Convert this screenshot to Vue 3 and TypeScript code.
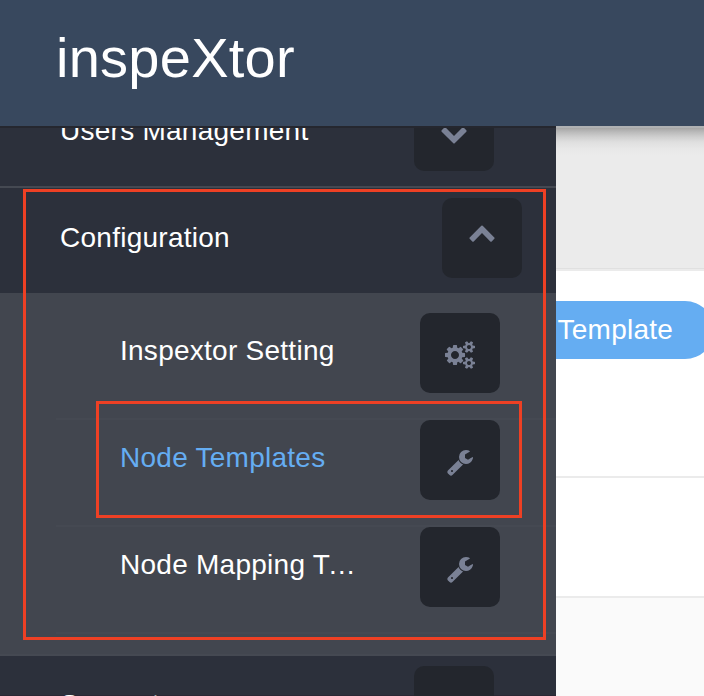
<script setup lang="ts">
type IconName = 'down' | 'up' | 'cogs' | 'wrench'

interface SubItem {
  label: string
  icon: IconName
  active?: boolean
  truncated?: boolean
}

interface MenuItem {
  label: string
  icon: IconName
  open?: boolean
  children?: SubItem[]
}

const icons: Record<IconName, { width: number; path: string }> = {
  down: {
    width: 1792,
    path: 'M1683 808l-742 741q-19 19-45 19t-45-19l-742-741q-19-19-19-45.500t19-45.500l166-165q19-19 45-19t45 19l531 531 531-531q19-19 45-19t45 19l166 165q19 19 19 45.500t-19 45.500z',
  },
  up: {
    width: 1792,
    path: 'M1683 1331l-166 165q-19 19-45 19t-45-19l-531-531-531 531q-19 19-45 19t-45-19l-166-165q-19-19-19-45.500t19-45.500l742-741q19-19 45-19t45 19l742 741q19 19 19 45.500t-19 45.500z',
  },
  cogs: {
    width: 1920,
    path: 'M896 896q0-106-75-181t-181-75-181 75-75 181 75 181 181 75 181-75 75-181zm768 512q0-52-38-90t-90-38-90 38-38 90q0 53 37.500 90.500t90.500 37.500 90.500-37.500 37.500-90.500zm0-1024q0-52-38-90t-90-38-90 38-38 90q0 53 37.500 90.500t90.500 37.500 90.500-37.500 37.500-90.500zm-384 421v185q0 10-7 19.500t-16 10.500l-155 24q-11 35-32 76 34 48 90 115 7 11 7 20 0 12-7 19-23 30-82.500 89.500t-78.500 59.500q-11 0-21-7l-115-90q-37 19-77 31-11 108-23 155-7 24-30 24h-186q-11 0-20-7.500t-10-17.500l-23-153q-34-10-75-31l-118 89q-7 7-20 7-11 0-21-8-144-133-144-160 0-9 7-19 10-14 41-53t47-61q-23-44-35-82l-152-24q-10-1-17-9.500t-7-19.500v-185q0-10 7-19.500t16-10.500l155-24q11-35 32-76-34-48-90-115-7-11-7-20 0-12 7-20 22-30 82-89t79-59q11 0 21 7l115 90q34-18 77-32 11-108 23-154 7-24 30-24h186q11 0 20 7.500t10 17.500l23 153q34 10 75 31l118-89q8-7 20-7 11 0 21 8 144 133 144 160 0 8-7 19-12 16-42 54t-45 60q23 48 34 82l152 23q10 2 17 10.500t7 19.500zm640 533v140q0 16-149 31-12 27-30 52 51 113 51 138 0 4-4 7-122 71-124 71-8 0-46-47t-52-68q-20 2-30 2t-30-2q-14 21-52 68t-46 47q-2 0-124-71-4-3-4-7 0-25 51-138-18-25-30-52-149-15-149-31v-140q0-16 149-31 13-29 30-52-51-113-51-138 0-4 4-7 4-2 35-20t59-34 30-16q8 0 46 46.500t52 67.500q20-2 30-2t30 2q51-71 92-112l6-2q4 0 124 70 4 3 4 7 0 25-51 138 17 23 30 52 149 15 149 31zm0-1024v140q0 16-149 31-12 27-30 52 51 113 51 138 0 4-4 7-122 71-124 71-8 0-46-47t-52-68q-20 2-30 2t-30-2q-14 21-52 68t-46 47q-2 0-124-71-4-3-4-7 0-25 51-138-18-25-30-52-149-15-149-31v-140q0-16 149-31 13-29 30-52-51-113-51-138 0-4 4-7 4-2 35-20t59-34 30-16q8 0 46 46.500t52 67.500q20-2 30-2t30 2q51-71 92-112l6-2q4 0 124 70 4 3 4 7 0 25-51 138 17 23 30 52 149 15 149 31z',
  },
  wrench: {
    width: 1792,
    path: 'M448 1472q0-26-19-45t-45-19-45 19-19 45 19 45 45 19 45-19 19-45zm644-420l-682 682q-37 37-90 37-52 0-91-37l-106-108q-38-36-38-90 0-53 38-91l681-681q39 98 114.500 173.500t173.500 114.500zm634-435q0 39-23 106-47 134-164.500 217.500t-258.500 83.500q-185 0-316.500-131.500t-131.500-316.500 131.500-316.500 316.500-131.500q58 0 121.500 16.500t107.500 46.500q16 11 16 28t-16 28l-293 169v224l193 107q5-3 79-48.500t135.500-81 70.500-35.500q15 0 23.500 10t8.500 25z',
  },
}

const menu: MenuItem[] = [
  { label: 'Users Management', icon: 'down' },
  {
    label: 'Configuration',
    icon: 'up',
    open: true,
    children: [
      { label: 'Inspextor Setting', icon: 'cogs' },
      { label: 'Node Templates', icon: 'wrench', active: true },
      { label: 'Node Mapping T', icon: 'wrench', truncated: true },
    ],
  },
  { label: 'Support', icon: 'down' },
]
</script>

<template>
  <div class="page">
    <header class="topbar">
      <span class="brand">inspeXtor</span>
    </header>
    <div class="body">
      <nav class="sidebar">
        <ul class="menu">
          <li v-for="item in menu" :key="item.label" class="group">
            <div class="row" :class="{ open: item.open }">
              <span class="label">{{ item.label }}</span>
              <span class="tile" :class="item.icon">
                <svg :viewBox="`0 0 ${icons[item.icon].width} 1792`" :width="icons[item.icon].width / 64" height="28">
                  <path :d="icons[item.icon].path" />
                </svg>
              </span>
            </div>
            <ul v-if="item.children" class="submenu">
              <li v-for="sub in item.children" :key="sub.label" class="subrow" :class="{ active: sub.active }">
                <span class="label">{{ sub.label }}<span v-if="sub.truncated" class="more">…</span></span>
                <span class="tile">
                  <svg :viewBox="`0 0 ${icons[sub.icon].width} 1792`" :width="icons[sub.icon].width / 64" height="28">
                    <path :d="icons[sub.icon].path" />
                  </svg>
                </span>
              </li>
            </ul>
          </li>
        </ul>
      </nav>
      <main class="content">
        <div class="crumbs"></div>
        <div class="toolbar">
          <button class="pill">Template</button>
        </div>
        <div class="filter"></div>
        <div class="table"></div>
      </main>
    </div>
    <div class="mark mark-section"></div>
    <div class="mark mark-item"></div>
  </div>
</template>

<style>
body {
  margin: 0;
}
</style>

<style scoped>
.page {
  position: relative;
  display: flex;
  flex-direction: column;
  width: 704px;
  height: 696px;
  overflow: hidden;
  font-family: "Liberation Sans", Arial, sans-serif;
  font-size: 28px;
  letter-spacing: 0.26px;
  color: #fff;
}
.topbar {
  flex: none;
  box-sizing: border-box;
  height: 126px;
  padding: 26px 56px 0;
  background: #38485e;
}
.brand {
  display: block;
  font-size: 56px;
  line-height: 63px;
}
.body {
  flex: 1;
  display: flex;
  min-height: 0;
}
.sidebar {
  flex: none;
  width: 556px;
  overflow: hidden;
  border-top: 2px solid #25272f;
  box-sizing: border-box;
  background: #2c303b;
  box-shadow: inset 0 -1px 0 #2b2734;
}
ul {
  list-style: none;
  margin: 0;
  padding: 0;
}
.menu {
  margin-top: -47px;
}
.group {
  border-bottom: 2px solid #454952;
}
.row {
  display: flex;
  justify-content: space-between;
  box-sizing: border-box;
  height: 105px;
  padding: 10px 62px 0 60px;
}
.row.open {
  padding-right: 34px;
}
.label {
  line-height: 31px;
  white-space: nowrap;
}
.row .label {
  margin-top: 24px;
}
.group:last-child .label {
  margin-top: 23px;
}
.more {
  margin-left: -2.5px;
}
.tile {
  flex: none;
  display: flex;
  align-items: center;
  justify-content: center;
  box-sizing: border-box;
  width: 80px;
  height: 80px;
  padding-top: 4px;
  border-radius: 10px;
  background: #23262d;
}
.tile svg {
  display: block;
  fill: #7a8195;
}
.tile.up {
  padding: 0 0 12px;
}
.submenu {
  padding: 20px 0;
  background: #42464f;
}
.subrow {
  display: flex;
  justify-content: space-between;
  box-sizing: border-box;
  height: 107px;
  margin-left: 56px;
  padding: 0 56px 0 64px;
  border-bottom: 2px solid #454952;
}
.subrow .label {
  margin-top: 22px;
}
.subrow.active .label {
  color: #65adf2;
}
.content {
  flex: 1;
  min-width: 0;
  display: flex;
  flex-direction: column;
  box-sizing: border-box;
  border-top: 2px solid #afb1b3;
  background: #fff;
}
.crumbs {
  flex: none;
  box-sizing: content-box;
  height: 140px;
  background: linear-gradient(#a5a5a5 0, #bababa 4px, #cfcfcf 9px, #dfdfdf 14px, #e8e8e8 21px, #ebebeb 28px);
  border-bottom: 1px solid #e0e0e0;
  box-shadow: 0 2px 0 #ebebeb;
}
.toolbar {
  box-sizing: border-box;
  height: 209px;
  padding-top: 32px;
  border-bottom: 2px solid #ebebeb;
}
.pill {
  display: block;
  box-sizing: border-box;
  width: 158px;
  height: 58px;
  padding: 13px 0 14px 1.5px;
  border: 0;
  border-radius: 0 29px 29px 0;
  background: #65adf2;
  color: #fff;
  font: inherit;
  line-height: 31px;
  letter-spacing: inherit;
  text-align: left;
}
.filter {
  box-sizing: border-box;
  height: 120px;
  border-bottom: 2px solid #ebebeb;
}
.table {
  flex: 1;
  background: #fafafa;
}
.mark {
  position: absolute;
  box-sizing: border-box;
  border: 3px solid #ee4024;
}
.mark-section {
  left: 23px;
  top: 189px;
  width: 523px;
  height: 451px;
}
.mark-item {
  left: 96px;
  top: 401px;
  width: 426px;
  height: 117px;
}
</style>
